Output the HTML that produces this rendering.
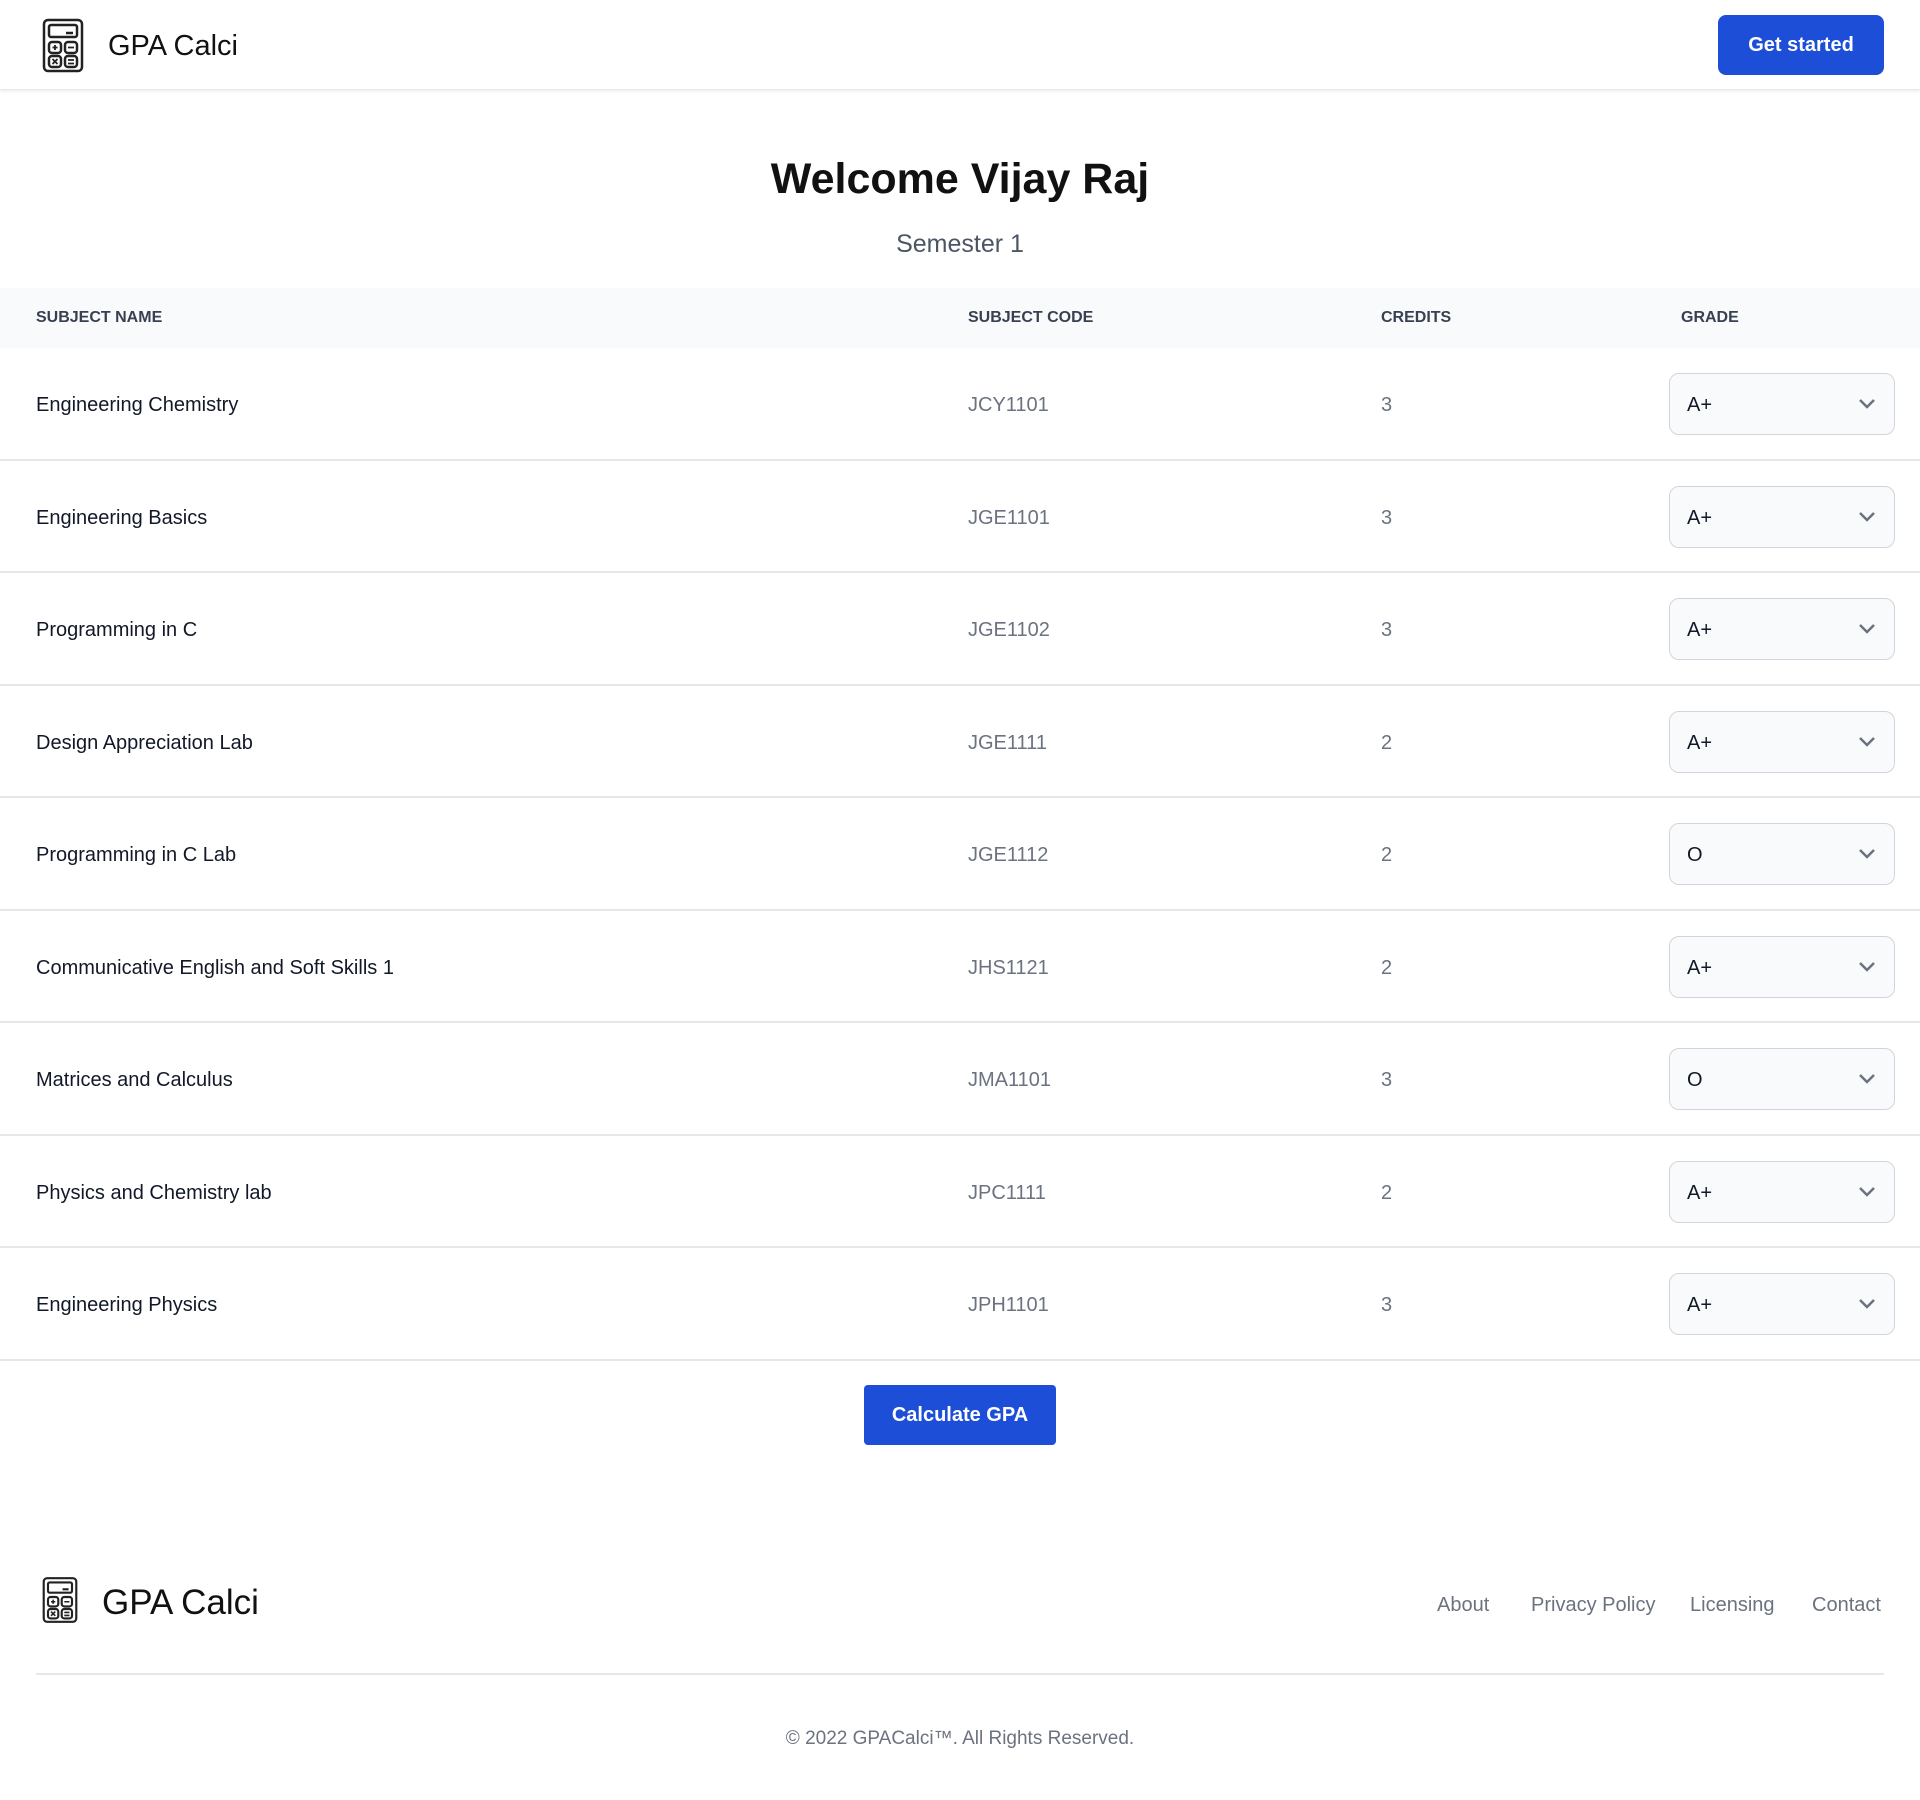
<!DOCTYPE html>
<html><head><meta charset="utf-8"><style>
*{box-sizing:border-box;margin:0;padding:0}
body{width:1920px;height:1800px;background:#fff;font-family:"Liberation Sans",sans-serif;position:relative;overflow:hidden;color:#111827}
.abs{position:absolute}
.hdr{left:0;top:0;width:1920px;height:90px;border-bottom:1px solid #e5e7eb;box-shadow:0 2px 3px rgba(0,0,0,.06)}
.btn{background:#1d4ed8;color:#fff;font-weight:bold;border-radius:8px;display:flex;align-items:center;justify-content:center;font-size:20px}
.th{top:288px;left:0;width:1920px;height:60px;background:#f9fafb}
.th span{position:absolute;top:21px;font-size:16px;font-weight:bold;color:#374151}
.row{left:0;width:1920px;height:112.5px;border-bottom:2px solid #e5e7eb}
.row .n{position:absolute;left:36px;top:46px;font-size:20px;color:#111827}
.row .c{position:absolute;left:968px;top:46px;font-size:20px;color:#6b7280}
.row .k{position:absolute;left:1381px;top:46px;font-size:20px;color:#6b7280}
.sel{position:absolute;left:1669px;top:25px;width:226px;height:62px;border:1px solid #d1d5db;border-radius:10px;background:#f9fafb}
.sel span{position:absolute;left:17px;top:20px;font-size:20px;color:#111827}
.sel svg{position:absolute;right:18px;top:23px}
.fl{top:1594px;font-size:20px;color:#6b7280}
</style></head><body>
<div class="abs hdr"></div>
<svg class="abs" style="left:42px;top:18px" width="42" height="55" viewBox="0 0 42 55" fill="none" stroke="#222" stroke-width="2.5">
<rect x="2" y="2" width="38" height="51" rx="4"/>
<rect x="7" y="7" width="28" height="12" rx="2"/>
<line x1="24" y1="15" x2="31" y2="15"/>
<rect x="7" y="24" width="12" height="11" rx="3"/><rect x="23" y="24" width="12" height="11" rx="3"/>
<rect x="7" y="38" width="12" height="11" rx="3"/><rect x="23" y="38" width="12" height="11" rx="3"/>
<path d="M13 27v5M10.5 29.5h5M26 29.5h6M10.5 41l5 5M15.5 41l-5 5M26 42h6M26 45.5h6" stroke-width="1.8"/>
</svg>
<div class="abs" style="left:108px;top:30px;font-size:29px;color:#111">GPA Calci</div>
<div class="abs btn" style="left:1718px;top:15px;width:166px;height:60px">Get started</div>

<div class="abs" style="left:0;width:1920px;top:155px;text-align:center;font-size:43px;font-weight:bold;color:#111">Welcome Vijay Raj</div>
<div class="abs" style="left:0;width:1920px;top:230px;text-align:center;font-size:25px;color:#4b5563">Semester 1</div>

<div class="abs th"><span style="left:36px">SUBJECT NAME</span><span style="left:968px">SUBJECT CODE</span><span style="left:1381px">CREDITS</span><span style="left:1681px">GRADE</span></div>

<div class="abs row" style="top:348px"><span class="n">Engineering Chemistry</span><span class="c">JCY1101</span><span class="k">3</span><div class="sel"><span>A+</span><svg width="18" height="12" viewBox="0 0 18 12"><path d="M2 3l7 7 7-7" stroke="#6b7280" stroke-width="2.5" fill="none"/></svg></div></div>
<div class="abs row" style="top:460.5px"><span class="n">Engineering Basics</span><span class="c">JGE1101</span><span class="k">3</span><div class="sel"><span>A+</span><svg width="18" height="12" viewBox="0 0 18 12"><path d="M2 3l7 7 7-7" stroke="#6b7280" stroke-width="2.5" fill="none"/></svg></div></div>
<div class="abs row" style="top:573px"><span class="n">Programming in C</span><span class="c">JGE1102</span><span class="k">3</span><div class="sel"><span>A+</span><svg width="18" height="12" viewBox="0 0 18 12"><path d="M2 3l7 7 7-7" stroke="#6b7280" stroke-width="2.5" fill="none"/></svg></div></div>
<div class="abs row" style="top:685.5px"><span class="n">Design Appreciation Lab</span><span class="c">JGE1111</span><span class="k">2</span><div class="sel"><span>A+</span><svg width="18" height="12" viewBox="0 0 18 12"><path d="M2 3l7 7 7-7" stroke="#6b7280" stroke-width="2.5" fill="none"/></svg></div></div>
<div class="abs row" style="top:798px"><span class="n">Programming in C Lab</span><span class="c">JGE1112</span><span class="k">2</span><div class="sel"><span>O</span><svg width="18" height="12" viewBox="0 0 18 12"><path d="M2 3l7 7 7-7" stroke="#6b7280" stroke-width="2.5" fill="none"/></svg></div></div>
<div class="abs row" style="top:910.5px"><span class="n">Communicative English and Soft Skills 1</span><span class="c">JHS1121</span><span class="k">2</span><div class="sel"><span>A+</span><svg width="18" height="12" viewBox="0 0 18 12"><path d="M2 3l7 7 7-7" stroke="#6b7280" stroke-width="2.5" fill="none"/></svg></div></div>
<div class="abs row" style="top:1023px"><span class="n">Matrices and Calculus</span><span class="c">JMA1101</span><span class="k">3</span><div class="sel"><span>O</span><svg width="18" height="12" viewBox="0 0 18 12"><path d="M2 3l7 7 7-7" stroke="#6b7280" stroke-width="2.5" fill="none"/></svg></div></div>
<div class="abs row" style="top:1135.5px"><span class="n">Physics and Chemistry lab</span><span class="c">JPC1111</span><span class="k">2</span><div class="sel"><span>A+</span><svg width="18" height="12" viewBox="0 0 18 12"><path d="M2 3l7 7 7-7" stroke="#6b7280" stroke-width="2.5" fill="none"/></svg></div></div>
<div class="abs row" style="top:1248px"><span class="n">Engineering Physics</span><span class="c">JPH1101</span><span class="k">3</span><div class="sel"><span>A+</span><svg width="18" height="12" viewBox="0 0 18 12"><path d="M2 3l7 7 7-7" stroke="#6b7280" stroke-width="2.5" fill="none"/></svg></div></div>

<div class="abs btn" style="left:864px;top:1385px;width:192px;height:60px;border-radius:4px">Calculate GPA</div>

<svg class="abs" style="left:42px;top:1576px" width="36" height="48" viewBox="0 0 42 55" fill="none" stroke="#222" stroke-width="2.5">
<rect x="2" y="2" width="38" height="51" rx="4"/>
<rect x="7" y="7" width="28" height="12" rx="2"/>
<line x1="24" y1="15" x2="31" y2="15"/>
<rect x="7" y="24" width="12" height="11" rx="3"/><rect x="23" y="24" width="12" height="11" rx="3"/>
<rect x="7" y="38" width="12" height="11" rx="3"/><rect x="23" y="38" width="12" height="11" rx="3"/>
<path d="M13 27v5M10.5 29.5h5M26 29.5h6M10.5 41l5 5M15.5 41l-5 5M26 42h6M26 45.5h6" stroke-width="1.8"/>
</svg>
<div class="abs" style="left:102px;top:1583px;font-size:35px;color:#111">GPA Calci</div>
<div class="abs fl" style="left:1437px">About</div>
<div class="abs fl" style="left:1531px">Privacy Policy</div>
<div class="abs fl" style="left:1690px">Licensing</div>
<div class="abs fl" style="left:1812px">Contact</div>
<div class="abs" style="left:36px;top:1673px;width:1848px;height:2px;background:#e5e7eb"></div>
<div class="abs" style="left:0;width:1920px;top:1728px;text-align:center;font-size:19px;color:#6b7280">© 2022 GPACalci™. All Rights Reserved.</div>
</body></html>
